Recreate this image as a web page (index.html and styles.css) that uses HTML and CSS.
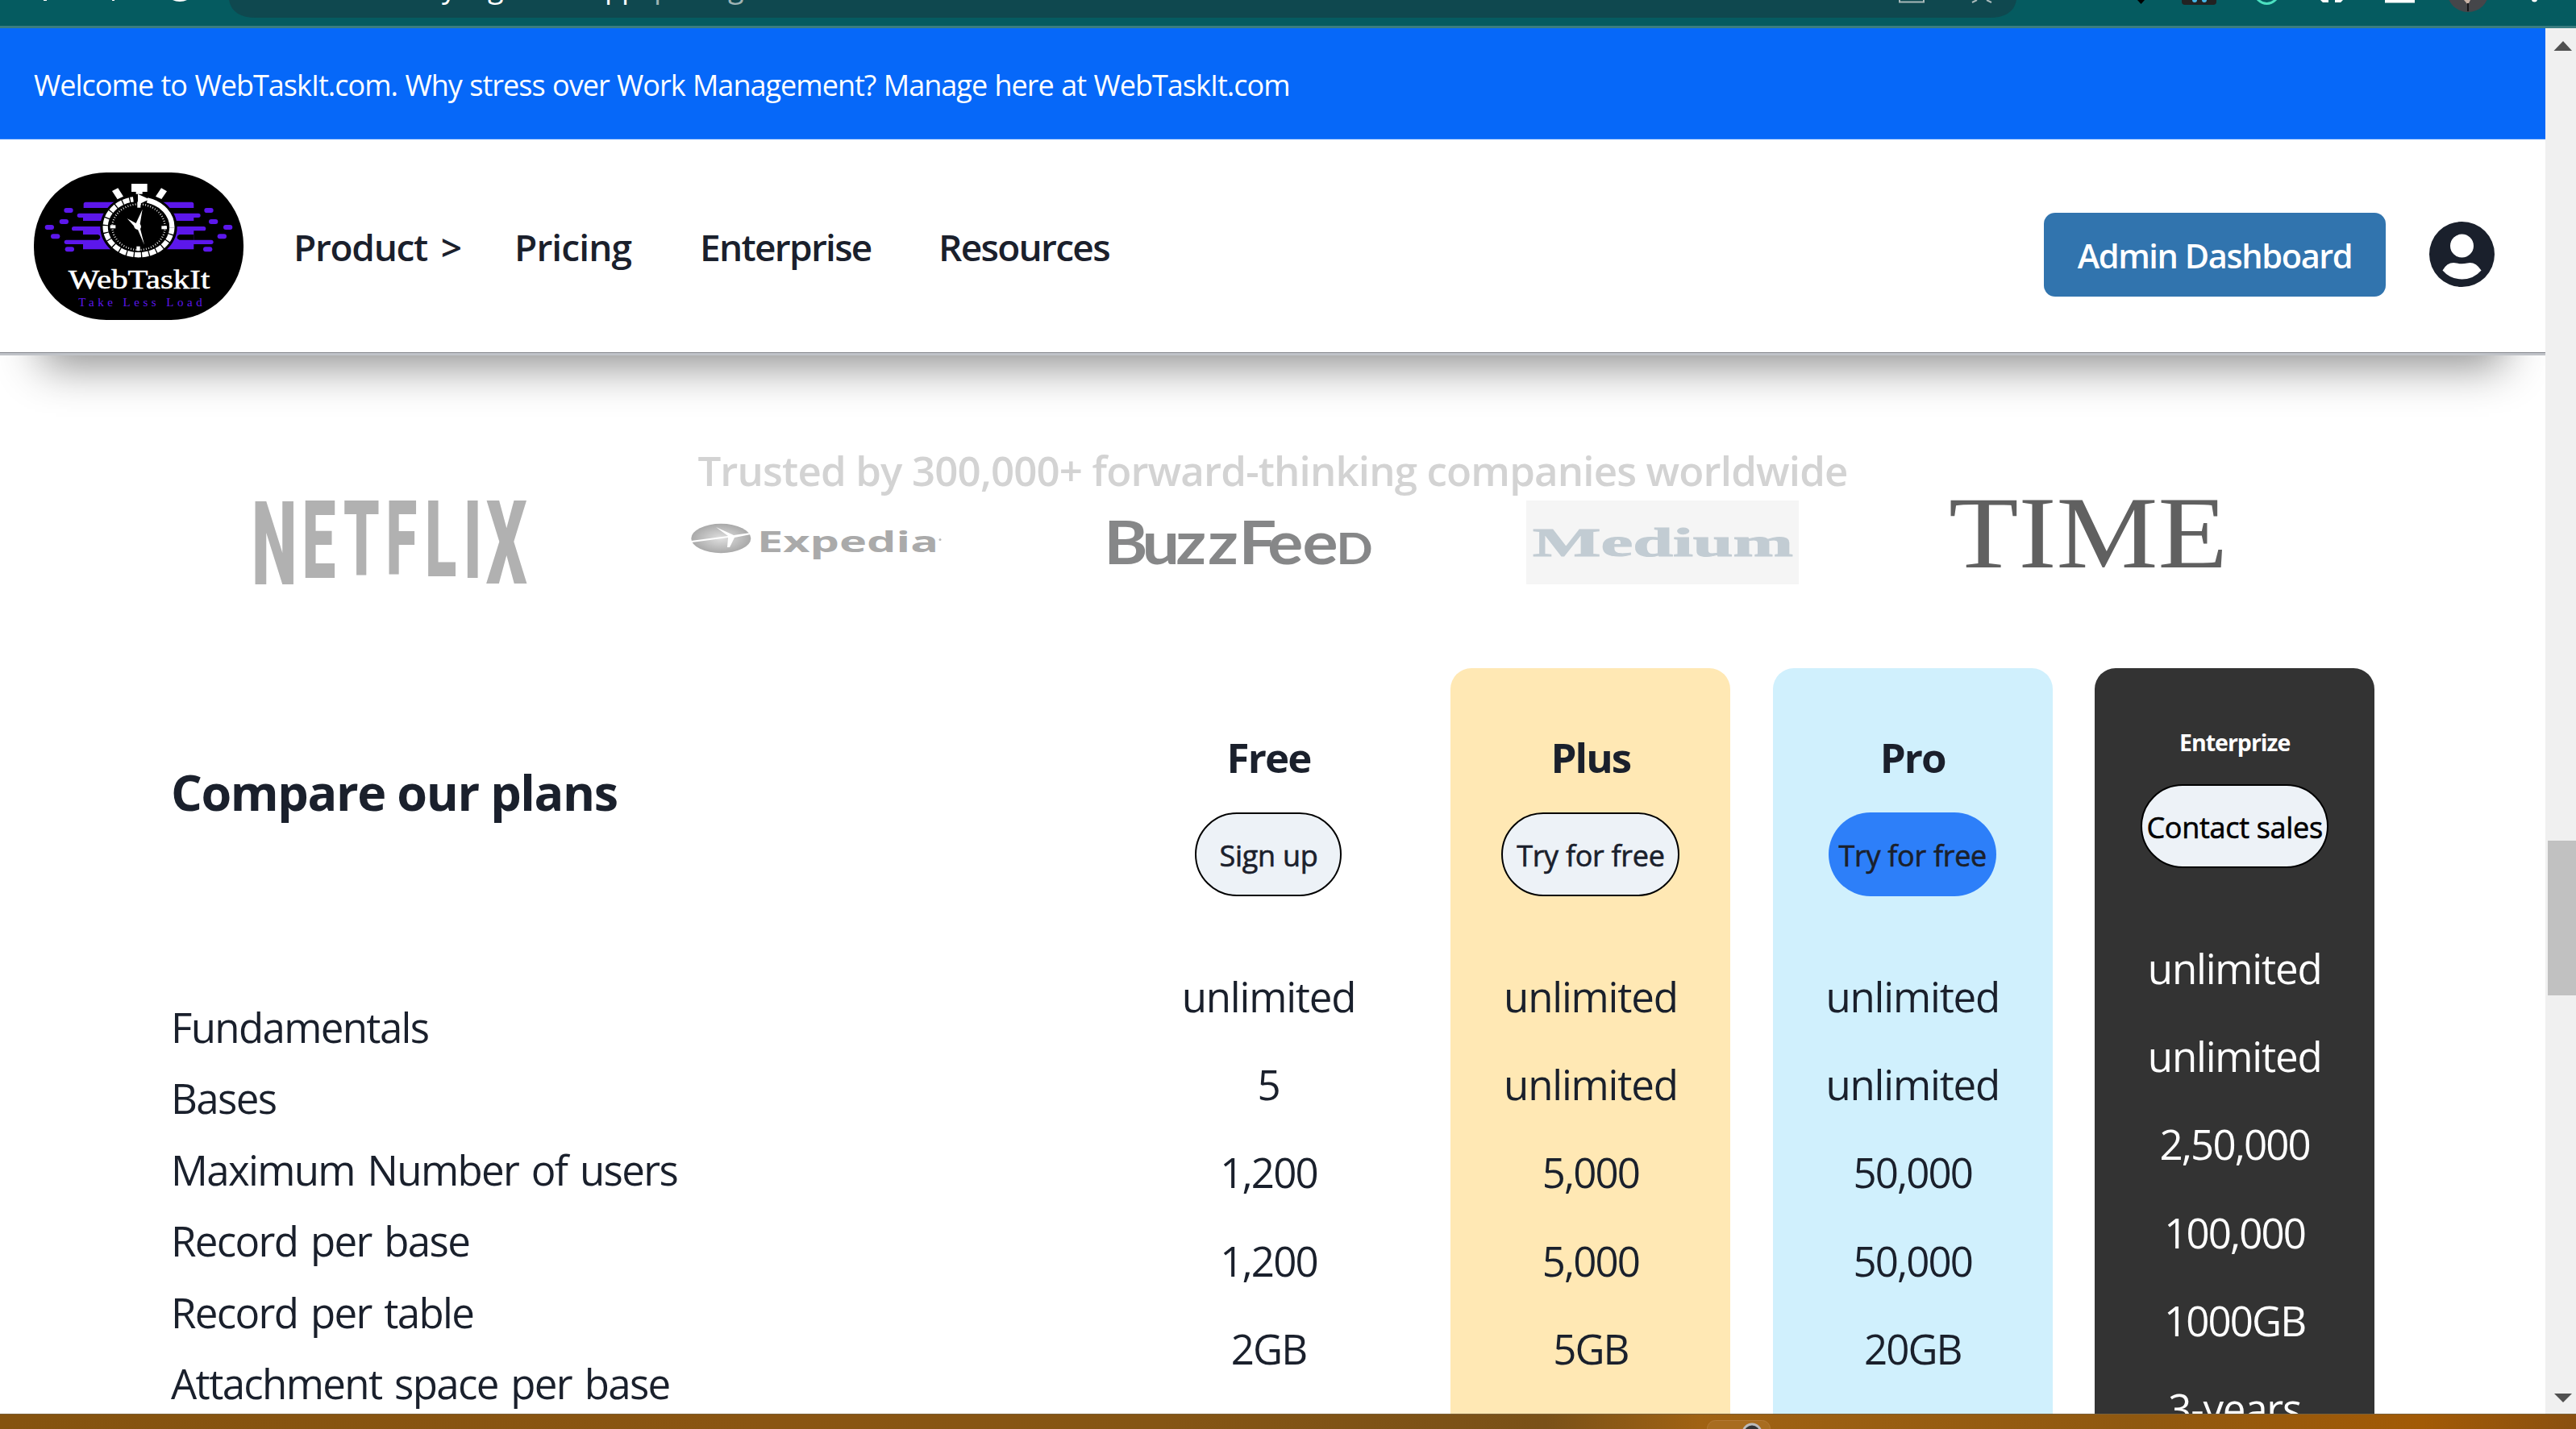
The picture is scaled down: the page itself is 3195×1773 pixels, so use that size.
FILE: index.html
```html
<!DOCTYPE html>
<html lang="en">
<head>
<meta charset="utf-8">
<title>WebTaskIt Pricing</title>
<link rel="stylesheet" href="styles.css">
</head>
<body>
<div class="browser">
  <div class="toolbar">
    <svg class="toolbar-art" viewBox="0 0 3195 32" width="3195" height="32">
      <path d="M284 0Q288 22 318 22H2467Q2497 22 2501 0Z" fill="#0f484f"/>
      <g fill="#fff">
        <rect x="54" y="0" width="4" height="1"/><rect x="139" y="0" width="3" height="1"/>
        <path d="M214 0H232Q228 2 223 2Q218 2 214 0Z"/>
        <text x="548 605 750 771" y="-3" class="url">ygpp</text>
        <text x="794 811 903" y="-3" class="url dim">/pg</text>
        <path d="M2878 0H2888V3H2881ZM2896 0H2906L2903 3H2896ZM2958 0H2995V3.500H2958Z"/>
        <circle cx="3143.500" cy="-1" r="3.500"/>
      </g>
      <path d="M2356 0V2.500H2386V0M2446 3L2452 0M2470 3L2464 0" fill="none" stroke="#a9b9ba" stroke-width="2"/>
      <path d="M2651 0H2660L2655.500 5Z"/>
      <rect x="2706" y="-20" width="43" height="26" rx="4" fill="#222"/>
      <circle cx="2722" cy="0" r="3" fill="#46b5e5"/><circle cx="2734" cy="0" r="3" fill="#46b5e5"/>
      <circle cx="2811.500" cy="-10" r="14.500" fill="none" stroke="#4ce0c0" stroke-width="3"/>
      <circle cx="3061" cy="-11" r="26" fill="#45464a"/>
      <path d="M3056 0H3064L3061 6Z" fill="#c9b3a6"/><path d="M3061 4V14" stroke="#16171a" stroke-width="2"/>
    </svg>
  </div>
  <div class="viewport">
    <div class="page">
      <div class="banner">Welcome to WebTaskIt.com. Why stress over Work Management? Manage here at WebTaskIt.com</div>
      <header class="nav">
        <svg class="logo" viewBox="66 39 780 549">
          <rect x="66" y="39" width="780" height="549" rx="270" fill="#000"/>
          <g fill="#5c17eb">
            <path d="M259 149H653Q661 149 661 157V171H251V157Q251 149 259 149ZM235 191H678Q686 191 686 199Q686 207 678 207H661V219H249V207H235Q227 207 227 199Q227 191 235 191ZM215 240H698Q706 240 706 248Q706 256 698 256H661V270H249V256H215Q207 256 207 248Q207 240 215 240ZM249 269H661V291H249ZM187 290H726Q734 290 734 298Q734 306 726 306H661V325H249V306H187Q179 306 179 298Q179 290 187 290Z"/>
            <path d="M249 270H305Q313 273 313 280Q313 288 305 290H249ZM661 270H608Q599 273 599 280Q599 288 608 290H661Z" fill="#000"/>
            <rect x="178" y="171" width="34" height="18" rx="9"/><rect x="161" y="213" width="34" height="18" rx="9"/>
            <rect x="107" y="234" width="34" height="18" rx="9"/><rect x="129" y="268" width="34" height="18" rx="9"/>
            <rect x="182" y="316" width="34" height="18" rx="9"/><rect x="700" y="171" width="34" height="18" rx="9"/>
            <rect x="717" y="213" width="34" height="18" rx="9"/><rect x="771" y="234" width="34" height="18" rx="9"/>
            <rect x="749" y="268" width="34" height="18" rx="9"/><rect x="696" y="316" width="34" height="18" rx="9"/>
          </g>
          <ellipse cx="456" cy="242" rx="143" ry="122" fill="#000"/>
          <g fill="#fff">
            <path d="M429 81H488V111H470V119H446V111H429Z"/>
            <path d="M357 108L379 97L399 128L377 139Z"/><path d="M540 97L561 109L541 138L519 128Z"/>
            <path d="M453 119L496 139L453 159Z"/>
            <rect x="451" y="148" width="12" height="22"/><rect x="448" y="314" width="13" height="17"/>
            <rect x="350" y="235" width="20" height="12"/><rect x="541" y="238" width="20" height="12"/>
            <path d="M470 176L461 230Q468 240 462 249L477 308L453 252Q440 250 438 238L413 210L446 228Z"/>
          </g>
          <g fill="none" stroke="#fff">
            <path d="M580 244A124 104 0 1 1 436 139" stroke-width="19" stroke-dasharray="24 4"/>
            <path d="M488 142A124 104 0 0 1 580 244" stroke-width="19"/>
            <ellipse cx="456" cy="242" rx="98" ry="85" stroke-width="7" stroke-dasharray="2.500 7"/>
          </g>
          <text x="194" y="472" class="logo-name" textLength="527" lengthAdjust="spacingAndGlyphs">WebTaskIt</text>
          <text x="232" y="537" class="logo-tag" textLength="460">Take Less Load</text>
        </svg>
        <nav class="links">
          <a class="product">Product &gt;</a>
          <a class="pricing">Pricing</a>
          <a class="enterprise-link">Enterprise</a>
          <a>Resources</a>
        </nav>
        <div class="account">
          <button class="admin">Admin Dashboard</button>
          <svg class="avatar" viewBox="0 0 81 81"><path fill="#1a202c" fill-rule="evenodd" d="M40.500 0A40.500 40.500 0 1 1 40.500 81A40.500 40.500 0 1 1 40.500 0ZM40.500 15.500A14.500 14.500 0 1 0 40.500 44.500A14.500 14.500 0 1 0 40.500 15.500ZM16.500 60.500Q26 71.500 40.500 71.500Q55 71.500 64.500 60.500Q57 49 47 51.500Q40.500 53 34 51.500Q23 49 16.500 60.500Z"/></svg>
        </div>
      </header>
      <main>
        <h2 class="trusted">Trusted by 300,000+ forward-thinking companies worldwide</h2>
        <div class="brands">
          <svg viewBox="0 0 338 104" class="brand"><g transform="scale(.55 1)" class="netflix"><text><tspan x="-7" y="103.500" font-size="145">N</tspan><tspan x="107" y="96" font-size="135">E</tspan><tspan x="200" y="92" font-size="129">T</tspan><tspan x="296" y="91" font-size="128">F</tspan><tspan x="384" y="93.500" font-size="131">L</tspan><tspan x="471" y="96" font-size="135">I</tspan><tspan x="522" y="103" font-size="144">X</tspan></text></g></svg>
          <svg viewBox="0 0 338 104" class="brand">
            <defs><radialGradient id="globe"><stop offset="0" stop-color="#e0e0e0"/><stop offset="1" stop-color="#a9a9a9"/></radialGradient></defs>
            <ellipse cx="53.300" cy="47" rx="37" ry="18.200" fill="url(#globe)"/>
            <path d="M16 50L62 44L47 33L69 43L90 40V42L70 46L64 58H61L62 46L17 52Z" fill="#fff"/>
            <text x="98" y="64.300" class="expedia" textLength="225" lengthAdjust="spacingAndGlyphs">Expedia</text>
            <circle cx="325" cy="48.500" r="1.500" fill="#bbb"/>
          </svg>
          <svg viewBox="0 0 338 104" class="brand"><g transform="scale(1.1 1)"><text y="79" class="buzz"><tspan x="2">B</tspan><tspan x="45">u</tspan><tspan x="83">z</tspan><tspan x="119">z</tspan><tspan x="154">F</tspan><tspan x="186.500">e</tspan><tspan x="226">e</tspan><tspan x="264" font-size="54">D</tspan></text></g></svg>
          <svg viewBox="0 0 338 104" class="brand medium"><text x="8" y="69" textLength="323" lengthAdjust="spacingAndGlyphs">Medium</text></svg>
          <svg viewBox="0 0 338 104" class="brand time-logo"><text x="-2" y="83" class="time" textLength="346" lengthAdjust="spacingAndGlyphs">TIME</text></svg>
        </div>
        <section class="plans">
          <div class="features">
            <h2>Compare our plans</h2>
            <ul>
              <li>Fundamentals</li>
              <li>Bases</li>
              <li>Maximum Number of users</li>
              <li>Record per base</li>
              <li>Record per table</li>
              <li>Attachment space per base</li>
            </ul>
          </div>
          <div class="plan free">
            <h3>Free</h3><button>Sign up</button>
            <ul><li>unlimited</li><li>5</li><li class="num">1,200</li><li class="num">1,200</li><li class="num">2GB</li></ul>
          </div>
          <div class="plan plus">
            <h3>Plus</h3><button>Try for free</button>
            <ul><li>unlimited</li><li>unlimited</li><li class="num">5,000</li><li class="num">5,000</li><li class="num">5GB</li></ul>
          </div>
          <div class="plan pro">
            <h3>Pro</h3><button>Try for free</button>
            <ul><li>unlimited</li><li>unlimited</li><li class="num">50,000</li><li class="num">50,000</li><li class="num">20GB</li></ul>
          </div>
          <div class="plan enterprise">
            <h3>Enterprize</h3><button>Contact sales</button>
            <ul><li>unlimited</li><li>unlimited</li><li class="num">2,50,000</li><li class="num">100,000</li><li class="num">1000GB</li><li>3-years</li></ul>
          </div>
        </section>
      </main>
    </div>
    <div class="scrollbar">
      <svg viewBox="0 0 38 20" class="arrow"><path d="M10.500 16L22 4L33 16Z"/></svg>
      <div class="track"><div class="thumb"></div></div>
      <svg viewBox="0 0 38 20" class="arrow"><path d="M11 4H33L22 15Z"/></svg>
    </div>
  </div>
  <div class="desktop"><svg class="tile" viewBox="0 0 79 20"><rect x=".5" y=".5" width="78" height="60" rx="10" fill="#a86c1f" stroke="#b37a35"/><circle cx="56" cy="16" r="11" fill="#333" stroke="#bbb" stroke-width="3"/></svg></div>
</div>
</body>
</html>
```
FILE: styles.css
```css
* { box-sizing: border-box; }
body, h2, h3, ul { margin: 0; padding: 0; }
body { font-family: "Open Sans", "Noto Sans", sans-serif; color: #1a202c; overflow: hidden; }
ul { list-style: none; }
svg { display: block; }
button { font: inherit; border: 0; padding: 0; color: inherit; white-space: nowrap; }

.browser { width: 3195px; height: 1773px; display: flex; flex-direction: column; }
.toolbar { height: 35px; flex: none; background: #055b60; border-bottom: 3px solid #3a7d80; }
.url { font-size: 36px; }
.dim { fill: #9fb4b5; }
.viewport { flex: 1; min-height: 0; display: flex; }
.page { width: 3157px; height: 100%; overflow: hidden; background: #fff; flex: none; }

.banner { height: 138px; padding: 4px 0 0 42px; display: flex; align-items: center; background: #0668f9; border-bottom: 1px solid #3a87fa; color: #fff; font-size: 36px; letter-spacing: -.98px; word-spacing: 1px; white-space: nowrap; }
.nav { height: 268px; padding: 0 63px 0 42px; display: flex; align-items: center; position: relative; background: #fff; border-bottom: 3px solid #c0c3c8; box-shadow: inset 0 -1px #85888e, 0 65px 52px -52px rgba(0, 0, 0, .45); }
.logo { width: 260px; height: 183px; }
.logo-name { font: 98px "Liberation Serif", serif; fill: #fff; stroke: #fff; stroke-width: 1.500; }
.logo-tag { font: 45px "Liberation Serif", serif; fill: #5c17eb; }
.links { display: flex; margin-left: 62px; font-size: 46px; font-weight: 600; letter-spacing: -1.700px; white-space: nowrap; }
.product { width: 274px; letter-spacing: -1.300px; word-spacing: 6px; }
.pricing { width: 230px; letter-spacing: -.9px; }
.enterprise-link { width: 296px; }
.account { margin: 20px 0 0 auto; display: flex; align-items: center; gap: 54px; }
.admin { width: 424px; height: 104px; border-radius: 14px; background: #3174ae; color: #fff; font-size: 41.500px; font-weight: 600; letter-spacing: -1.400px; padding-top: 2px; }
.avatar { width: 81px; height: 81px; }

.trusted { padding-top: 104px; height: 180px; line-height: 76px; text-align: center; font-size: 51px; font-weight: 600; letter-spacing: -.85px; color: #d3d3d3; white-space: nowrap; }
.brands { display: flex; gap: 187.800px; padding-left: 315.700px; }
.brand { width: 338px; height: 104px; flex: none; }
.netflix { font-family: Roboto, sans-serif; font-weight: 900; fill: #b1b1b1; }
.expedia { font: 700 35px "Open Sans", sans-serif; fill: #aaa; }
.buzz { font-family: Lato, sans-serif; font-weight: 700; font-size: 75px; fill: #868788; }
.medium { background: #f5f5f5; font: 700 50px "Liberation Serif", serif; fill: #c2ccd3; stroke: #c2ccd3; stroke-width: 1; }
.time-logo { overflow: visible; }
.time { font: 126px "Liberation Serif", serif; fill: #606060; }

.plans { margin-top: 104px; padding-left: 212px; display: grid; grid-template-columns: 1135.600px repeat(4, 347px); column-gap: 52.400px; }
.features { padding-top: 110px; white-space: nowrap; }
.features h2 { font-size: 61px; font-weight: 700; line-height: 88px; margin-bottom: 203px; letter-spacing: -1.400px; }
.features li { font-size: 51px; line-height: 88.400px; letter-spacing: -1.650px; word-spacing: 4px; }
.plan { height: 1000px; padding-top: 71px; border-radius: 26px; display: flex; flex-direction: column; align-items: center; text-align: center; }
.plan h3 { font-size: 51px; font-weight: 700; line-height: 78px; margin-bottom: 30px; letter-spacing: -1.900px; }
.plan button { height: 104px; flex: none; border-radius: 52px; border: 2px solid #000; background: #edf2f7; font-size: 36px; letter-spacing: -.3px; -webkit-text-stroke: .6px currentColor; padding-top: 2px; margin-bottom: 70px; }
.plan li { font-size: 51px; line-height: 109.200px; letter-spacing: -1.200px; }
.plan .num { letter-spacing: -1.900px; }
.free button { width: 182px; }
.plus { background: #ffe8b4; }
.plus button { width: 221px; }
.pro { background: #d0f0fd; }
.pro button { width: 208px; border: 0; background: #2d7ff9; }
.enterprise { background: #333; color: #fff; }
.enterprise h3 { font-size: 28.500px; line-height: 42px; margin-bottom: 31px; letter-spacing: -1px; }
.enterprise button { width: 233px; color: #000; }

.scrollbar { width: 38px; background: #f0f0f0; display: flex; flex-direction: column; padding: 12px 0 9px; }
.arrow { width: 38px; height: 20px; fill: #505050; flex: none; }
.track { flex: 1; padding: 976px 0 0 3px; }
.thumb { height: 192px; background: #c1c1c1; }
.desktop { height: 19px; flex: none; border-top: 1px solid #7a6038; padding: 7px 0 0 2117px; overflow: hidden; background: linear-gradient(90deg, #85530f, #8a5512 30%, #855514 45%, #7a5118 60%, #a06213 66%, #8f5810 83%, #a25a06 94%, #8a5010); }
.tile { width: 79px; height: 20px; }
```
